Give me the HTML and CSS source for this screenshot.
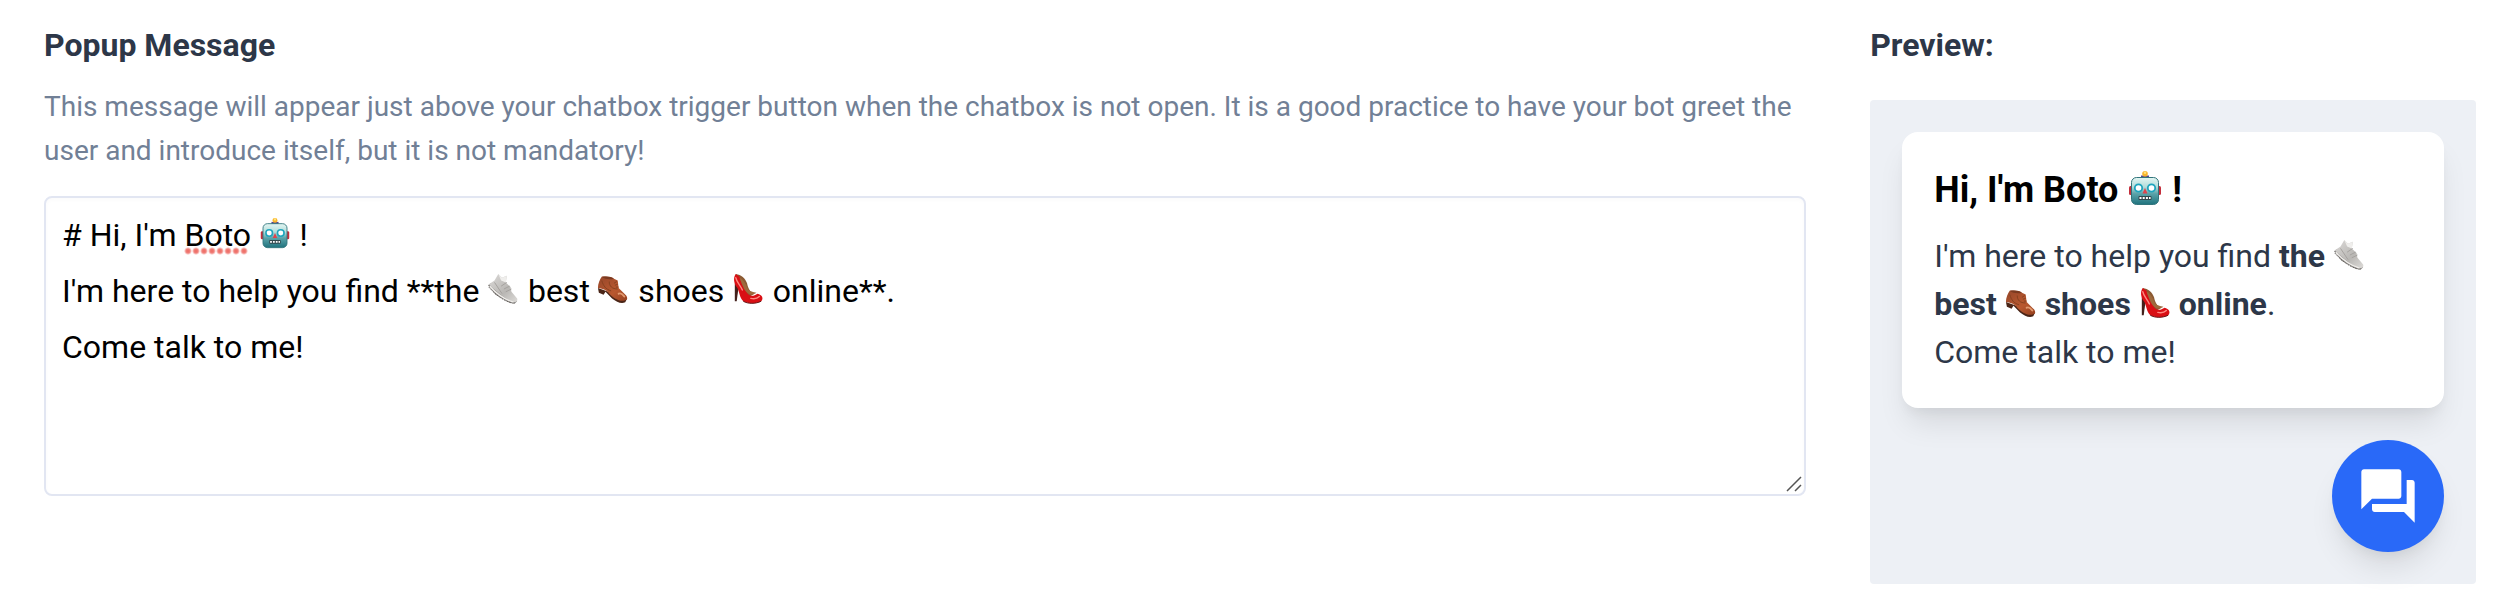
FILE: index.html
```html
<!DOCTYPE html>
<html lang="en">
<head>
<meta charset="utf-8">
<meta name="viewport" content="width=device-width, initial-scale=1">
<title>Popup Message</title>
<link rel="stylesheet" href="styles.css">
</head>
<body>
<svg class="sprite" aria-hidden="true">
  <defs>
    <linearGradient id="robot-face" x1="0" y1="0" x2="0" y2="1">
      <stop offset="0" stop-color="#e3f6f3"/><stop offset=".35" stop-color="#b3dcda"/><stop offset=".6" stop-color="#5ba3a9"/><stop offset="1" stop-color="#1f727d"/>
    </linearGradient>
    <linearGradient id="leather" x1="0" y1="0" x2="1" y2="1">
      <stop offset="0" stop-color="#97472a"/><stop offset=".6" stop-color="#b9582f"/><stop offset="1" stop-color="#95401f"/>
    </linearGradient>
    <linearGradient id="canvas-grey" x1="0" y1="0" x2="1" y2="1">
      <stop offset="0" stop-color="#dcdad8"/><stop offset=".6" stop-color="#b9b7b4"/><stop offset="1" stop-color="#dddbd8"/>
    </linearGradient>
    <symbol id="robot" viewBox="-2 -1 36 36">
      <path d="M12 4.500h8v4h-8z" fill="#57478a"/>
      <circle cx="16" cy="2.800" r="2.800" fill="#f9b52c"/>
      <circle cx="16" cy="1.800" r="1.300" fill="#ffe27a"/>
      <rect x="0" y="15" width="4" height="9" rx="1.500" fill="#c42f3c"/>
      <rect x="28" y="15" width="4" height="9" rx="1.500" fill="#c42f3c"/>
      <rect x="2.500" y="6.500" width="27" height="27" rx="5" fill="url(#robot-face)" stroke="#32757c" stroke-width="1"/>
      <circle cx="9.500" cy="17" r="3.700" fill="#fff" stroke="#1fa5bd" stroke-width="1.800"/>
      <circle cx="22.500" cy="17" r="3.700" fill="#fff" stroke="#1fa5bd" stroke-width="1.800"/>
      <path d="M16 17l2.500 5.500h-5z" fill="#e0434c"/>
      <rect x="9.500" y="25" width="13" height="4" rx="1" fill="#31474c"/>
      <path d="M10.500 26h2v2h-2zM13.700 26h2v2h-2zM16.900 26h2v2h-2zM20 26h1.600v2H20z" fill="#fff"/>
    </symbol>
    <symbol id="sneaker" viewBox="-1 -1 34 34">
      <path d="M0 12l3-2 9 8 9 7 9 2 1 2-3 3-6-2L8 22z" fill="#8c8986"/>
      <path d="M1 11l6-4 4-7 4 4 5-2-1 7 5 5 1 5 6 7c1 3-1 4-4 4C19 27 9 19 1 11z" fill="url(#canvas-grey)"/>
      <path d="M11 0l4 4 5-2-1 7-5-2z" fill="#efeeec"/>
      <path d="M14 13l6-4M17 16l6-3M19 19l6-3M7 9l8 12" stroke="#a3a09d" stroke-width="1" fill="none"/>
      <path d="M2 13c7 8 16 14 25 17" stroke="#efedea" stroke-width="1.500" fill="none"/>
      <path d="M1 14c7 8 16 15 25 17" stroke="#65615e" stroke-width="1" fill="none" stroke-dasharray="2 1"/>
    </symbol>
    <symbol id="brogue" viewBox="-1 -1 34 34">
      <path d="M0 15l1 5 5 2 2-3 7 7c5 4 10 6 14 4l2-4z" fill="#4a2517"/>
      <path d="M0 15C0 10 2 6 4 3c6-1 11 0 13 2l4 2 1 8 8 8c2 3 1 5-1 5-6 2-12-2-17-7-3-4-6-5-12-6z" fill="url(#leather)"/>
      <path d="M4 3c6-1 10 0 13 2-4 1-9 1-13-2z" fill="#7b3a20"/>
      <path d="M12 8c0 5 3 8 9 8M20 8l-3 2M21 11l-3 1M22 14l-3 0M4 7c2 6 4 9 10 11" stroke="#84401f" stroke-width="1" fill="none"/>
      <path d="M22 21c2-1 4 0 6 3" stroke="#e29a70" stroke-width="2" fill="none" stroke-linecap="round"/>
    </symbol>
    <symbol id="heel" viewBox="-1 -1 34 34">
      <path d="M2 10v19h2l2-15z" fill="#43201b"/>
      <path d="M3 0c6 1 10 4 12 10 1 5 3 10 8 11l-9 5L4 12z" fill="#8b5a33"/>
      <path d="M3 0C0 4 1 10 4 14c3 4 3 12 7 15 5 3 14 3 19 0 3-3 1-7-4-8-4 3-9 3-11-1C11 14 8 8 7 3z" fill="#d90f14"/>
      <path d="M7 4c3 7 4 12 8 16 3 3 7 2 10 0-3-1-7-1-9-4C14 12 12 6 7 4z" fill="#9e6a3d"/>
      <path d="M3 4c1 5 5 8 7 13M19 26c4 1 7 0 9-2" stroke="#ff8a82" stroke-width="1.500" fill="none" stroke-linecap="round"/>
      <path d="M11 29c5 3 13 3 19 0" stroke="#5e1414" stroke-width="1" fill="none"/>
    </symbol>
  </defs>
</svg>
<main class="settings">
  <section class="field">
    <label class="title" for="popup-message">Popup Message</label>
    <p class="hint" id="popup-hint">This message will appear just above your chatbox trigger button when the chatbox is not open. It is a good practice to have your bot greet the user and introduce itself, but it is not mandatory!</p>
    <!-- Each em space in the textarea leaves room for an emoji drawn over it. -->
    <div class="editor">
      <textarea class="editor-input" id="popup-message" aria-describedby="popup-hint" spellcheck="false"># Hi, I'm Boto &emsp; !
I'm here to help you find **the &emsp; best &emsp; shoes &emsp; online**.
Come talk to me!</textarea>
      <span class="squiggle"></span>
      <svg class="emoji over over-robot" role="img" aria-label="robot"><use href="#robot"/></svg>
      <svg class="emoji over over-sneaker" role="img" aria-label="running shoe"><use href="#sneaker"/></svg>
      <svg class="emoji over over-brogue" role="img" aria-label="brown shoe"><use href="#brogue"/></svg>
      <svg class="emoji over over-heel" role="img" aria-label="high heel"><use href="#heel"/></svg>
      <svg class="editor-grip" viewBox="0 0 16 16" aria-hidden="true"><path d="M1 15L15 1M9 15l6-6" stroke="#555" stroke-width="1.500" fill="none"/></svg>
    </div>
  </section>
  <section class="preview">
    <h2 class="title">Preview:</h2>
    <div class="stage">
      <article class="bubble">
        <h1 class="bubble-title">Hi, I'm Boto <svg class="emoji" role="img" aria-label="robot"><use href="#robot"/></svg> !</h1>
        <p class="bubble-text">I'm here to help you find <strong>the <svg class="emoji" role="img" aria-label="running shoe"><use href="#sneaker"/></svg> best <svg class="emoji" role="img" aria-label="brown shoe"><use href="#brogue"/></svg> shoes <svg class="emoji" role="img" aria-label="high heel"><use href="#heel"/></svg> online</strong>.<br>Come talk to me!</p>
      </article>
      <button class="trigger" type="button" aria-label="Open chat">
        <svg class="trigger-icon" viewBox="0 0 24 24" aria-hidden="true"><path fill="currentColor" d="M21 6h-2v9H6v2c0 .55.45 1 1 1h11l4 4V7c0-.55-.45-1-1-1zm-4 6V3c0-.55-.45-1-1-1H3c-.55 0-1 .45-1 1v14l4-4h10c.55 0 1-.45 1-1z"/></svg>
      </button>
    </div>
  </section>
</main>
</body>
</html>
```
FILE: styles.css
```css
* { box-sizing: border-box; }

body {
  margin: 0;
  background: #fff;
  color: #2d3748;
  font-family: Roboto, "Liberation Sans", sans-serif;
}

.sprite { position: absolute; width: 0; height: 0; }

.settings {
  display: grid;
  grid-template-columns: minmax(0, 32fr) minmax(0, 11fr);
  gap: 64px;
  padding: 21px 42px 30px 44px;
}

.field,
.preview { display: flex; flex-direction: column; }

.title {
  margin: 0;
  font-size: 32px;
  font-weight: 700;
  line-height: 48px;
}

.hint {
  margin: 16px 0 23px;
  color: #718096;
  font-size: 28px;
  line-height: 44px;
}

.editor {
  position: relative;
  font-size: 32px;
}

.editor-input {
  display: block;
  width: 100%;
  min-height: 300px;
  padding: 9px 16px;
  border: 2px solid #e2e6f2;
  border-radius: 8px;
  background: #fff;
  box-shadow: inset 0 2px 4px rgba(0, 0, 0, 0.02);
  color: #000;
  font: inherit;
  line-height: 56px;
  resize: none;
}

.editor-grip {
  position: absolute;
  right: 4px;
  bottom: 4px;
  width: 16px;
  height: 16px;
  pointer-events: none;
}

.squiggle {
  position: absolute;
  left: 140px;
  top: 51px;
  width: 64px;
  height: 8px;
  background: radial-gradient(circle, #ee6a62 0, #f0807a 2px, transparent 4px) left top / 8px 8px repeat-x;
  pointer-events: none;
}

.emoji {
  width: 1em;
  height: 1em;
  vertical-align: -4px;
}

.over {
  position: absolute;
  top: 77px;
  pointer-events: none;
}

.over-robot { left: 215px; top: 21px; }
.over-sneaker { left: 443px; }
.over-brogue { left: 553px; }
.over-heel { left: 688px; }

.stage {
  display: flex;
  flex-direction: column;
  gap: 32px;
  margin-top: 31px;
  padding: 32px;
  border-radius: 4px;
  background: #edf0f5;
}

.bubble {
  padding: 32px;
  border-radius: 16px;
  background: #fff;
  box-shadow: 0 20px 30px -6px rgba(0, 0, 0, 0.1), 0 8px 12px -4px rgba(0, 0, 0, 0.05);
}

.bubble-title {
  margin: 0 0 16px;
  color: #000;
  font-size: 36px;
  font-weight: 700;
  line-height: 52px;
}

.bubble-text {
  margin: 0;
  font-size: 32px;
  line-height: 48px;
}

.trigger {
  display: grid;
  place-items: center;
  align-self: flex-end;
  width: 112px;
  height: 112px;
  padding: 0;
  border: 0;
  border-radius: 50%;
  background: #2969f8;
  color: #fff;
  box-shadow: 0 20px 30px -6px rgba(0, 0, 0, 0.1), 0 8px 12px -4px rgba(0, 0, 0, 0.05);
}

.trigger-icon { width: 64px; height: 64px; }
```
